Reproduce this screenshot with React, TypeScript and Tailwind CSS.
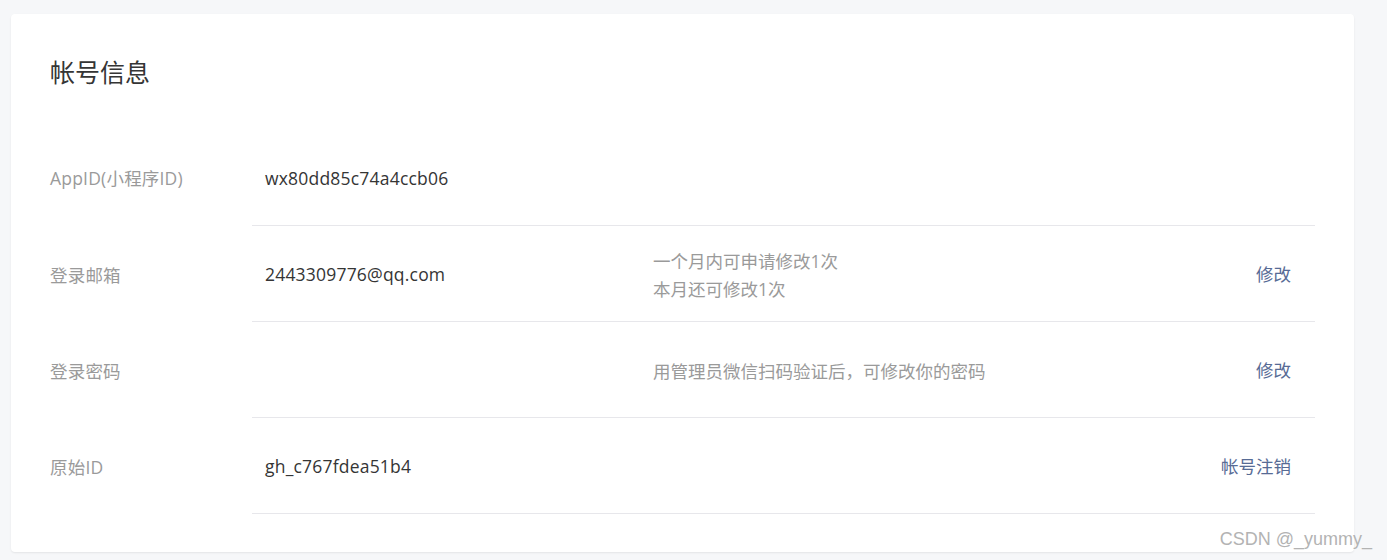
interface InfoRow {
  label: string;
  value?: string;
  desc?: string[];
  action?: string;
}

const rows: InfoRow[] = [
  { label: 'AppID(小程序ID)', value: 'wx80dd85c74a4ccb06' },
  {
    label: '登录邮箱',
    value: '2443309776@qq.com',
    desc: ['一个月内可申请修改1次', '本月还可修改1次'],
    action: '修改',
  },
  {
    label: '登录密码',
    desc: ['用管理员微信扫码验证后，可修改你的密码'],
    action: '修改',
  },
  { label: '原始ID', value: 'gh_c767fdea51b4', action: '帐号注销' },
];

export default function App() {
  return (
    <div
      className="relative h-[560px] w-full overflow-hidden bg-[#f6f7f9] pt-[14px]"
      style={{ fontFamily: '"Open Sans", "Noto Sans CJK SC", sans-serif' }}
    >
      <div className="ml-[11px] w-[1343px] rounded-[4px] bg-white px-[39px] pt-[40px] pb-[38px] shadow-[0_1px_2px_rgba(0,0,0,0.08)]">
        <h1 className="mb-[39px] h-[36px] text-[25px] leading-[36px] font-normal text-[#353535]">帐号信息</h1>

        {rows.map((row, i) => (
          <div key={row.label} className={`flex items-stretch ${i === 0 ? 'h-[97px]' : 'h-[96px]'}`}>
            <div className="flex w-[202px] shrink-0 items-center pt-[2px] text-[17.5px] tracking-[0.2px] text-[#9a9a9a]">
              {row.label}
            </div>
            <div className="flex flex-1 items-center border-b border-[#e7e7eb] pt-[2px] pr-[24px] pl-[13px] text-[17.5px]">
              <div className="w-[388px] shrink-0 tracking-[0.2px] text-[#353535]">{row.value}</div>
              <div className="flex-1 leading-[28px] text-[#9a9a9a]">
                {row.desc?.map((line) => (
                  <div key={line}>{line}</div>
                ))}
              </div>
              {row.action && <a className="cursor-pointer text-[#576b95]">{row.action}</a>}
            </div>
          </div>
        ))}
      </div>

      {/* watermark */}
      <div
        className="absolute top-[526px] right-[15px] text-[18px] text-[#b3b3b3] [text-shadow:0_0_1px_#fff]"
        style={{ fontFamily: '"Liberation Sans", Arial, sans-serif' }}
      >
        CSDN @_yummy_
      </div>
    </div>
  );
}
